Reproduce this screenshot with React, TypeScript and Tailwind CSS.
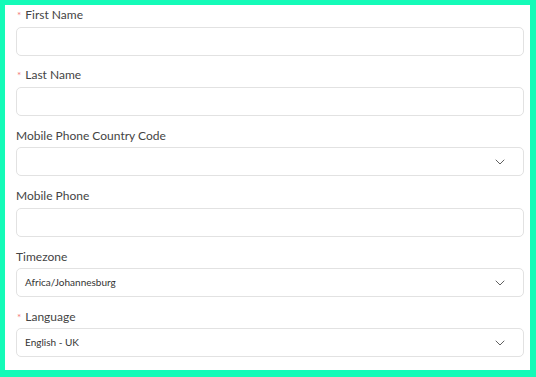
import { ChevronDown } from "lucide-react";

const fields = [
  { label: "First Name", required: true, type: "input", value: "" },
  { label: "Last Name", required: true, type: "input", value: "" },
  { label: "Mobile Phone Country Code", required: false, type: "select", value: "" },
  { label: "Mobile Phone", required: false, type: "input", value: "" },
  { label: "Timezone", required: false, type: "select", value: "Africa/Johannesburg" },
  { label: "Language", required: true, type: "select", value: "English - UK" },
];

export default function App() {
  return (
    <div className="w-[536px] h-[377px] bg-[#14fbb8] pl-[5px] pt-[5px] pr-[6px] pb-[7px] font-['Lato',sans-serif]">
      <div className="h-full bg-white pl-[11px] pr-[6px] pt-[1px] flex flex-col gap-[10.9px]">
        {fields.map((f) => (
          <div key={f.label} className="flex flex-col">
            <label className="h-[18px] leading-[18px] mb-[2.5px] text-[12px] text-[#444] flex items-center">
              {f.required && <span className="text-[#f47a7a] text-[10px] mr-[4px] ml-[1px]">*</span>}
              {f.label}
            </label>
            <div className="h-[29px] border border-[#e2e2e2] rounded-[5px] flex items-center px-[8px] text-[10px] text-[#333]">
              <span className="flex-1">{f.value}</span>
              {f.type === "select" && (
                <ChevronDown className="w-[16px] h-[16px] text-[#555] mr-[7px]" strokeWidth={1.4} />
              )}
            </div>
          </div>
        ))}
      </div>
    </div>
  );
}
